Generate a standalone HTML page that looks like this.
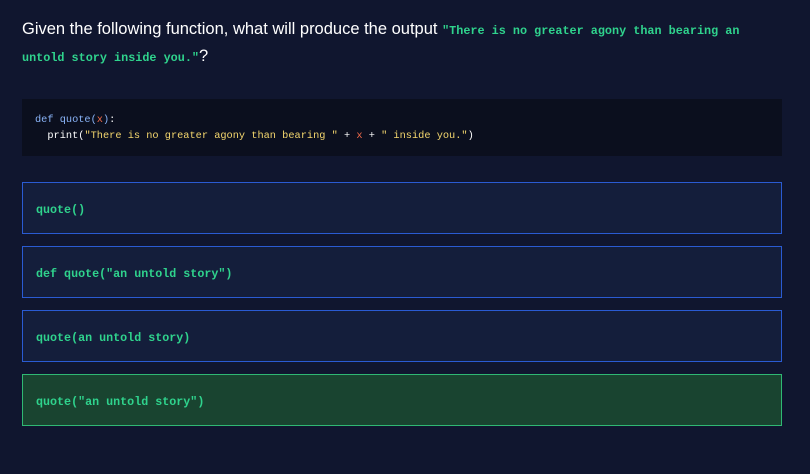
<!DOCTYPE html>
<html><head><style>
body{margin:0;width:810px;height:474px;background:#10162f;overflow:hidden;font-family:"Liberation Sans",sans-serif;}
.h{position:absolute;left:22px;top:17px;width:740px;color:#fff;font-size:16.5px;line-height:25px;}
.h code{font-family:"Liberation Mono",monospace;font-weight:bold;font-size:11.8px;color:#2fd38d;}
.pre{position:absolute;left:22px;top:99px;width:760px;height:57px;background:#0b0f1e;font-family:"Liberation Mono",monospace;font-size:10.3px;line-height:16px;color:#fff;box-sizing:border-box;padding:13px 0 0 13px;white-space:pre;}
.k{color:#8ab4f8}.r{color:#f06a4a}.s{color:#f5d76e}
.o{position:absolute;left:22px;width:760px;height:52px;box-sizing:border-box;border:1px solid #2a5bd2;background:#141e3b;font-family:"Liberation Mono",monospace;font-weight:bold;font-size:11.7px;color:#2fd38d;padding:2px 13px 0;line-height:50px;}
.g{background:#194430;border-color:#2fb873;}
</style></head><body>
<div class="h">Given the following function, what will produce the output <code>"There is no greater agony than bearing an untold story inside you."</code>?</div>
<div class="pre"><span class="k">def quote(</span><span class="r">x</span><span class="k">)</span>:
  print(<span class="s">"There is no greater agony than bearing "</span> + <span class="r">x</span> + <span class="s">" inside you."</span>)</div>
<div class="o" style="top:182px">quote()</div>
<div class="o" style="top:246px">def quote("an untold story")</div>
<div class="o" style="top:310px">quote(an untold story)</div>
<div class="o g" style="top:374px">quote("an untold story")</div>
</body></html>
